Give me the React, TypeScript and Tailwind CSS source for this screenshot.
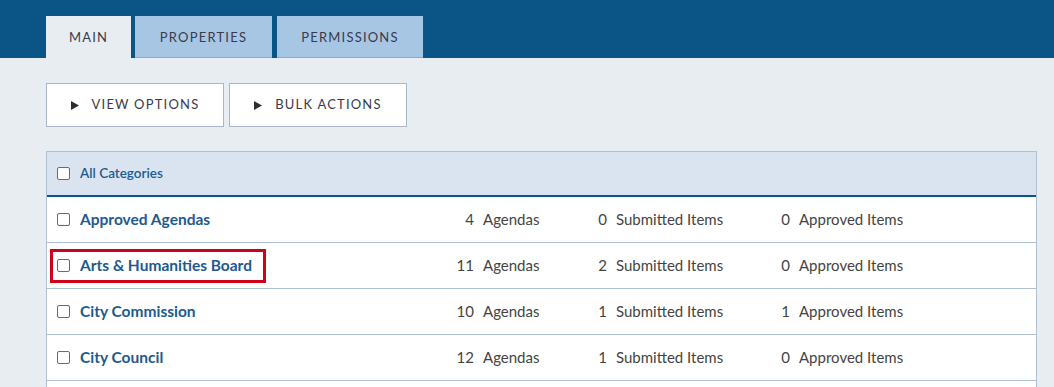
import React from 'react';

interface Category {
  name: string;
  agendas: number;
  submitted: number;
  approved: number;
  highlight?: boolean;
}

const categories: Category[] = [
  { name: 'Approved Agendas', agendas: 4, submitted: 0, approved: 0 },
  { name: 'Arts & Humanities Board', agendas: 11, submitted: 2, approved: 0, highlight: true },
  { name: 'City Commission', agendas: 10, submitted: 1, approved: 1 },
  { name: 'City Council', agendas: 12, submitted: 1, approved: 0 },
];

function Checkbox() {
  return <span className="block w-[13px] h-[13px] shrink-0 rounded-[2px] border border-[#6b6b6b] bg-white" />;
}

function Stat({ value, label, width }: { value: number; label: string; width: string }) {
  return (
    <div className={`flex items-center ${width}`}>
      <span className="w-[24px] text-right">{value}</span>
      <span className="ml-[9px]">{label}</span>
    </div>
  );
}

export default function App() {
  const tabs = ['MAIN', 'PROPERTIES', 'PERMISSIONS'];

  return (
    <div className="h-[387px] overflow-hidden bg-[#e8edf2] font-['Lato','Open_Sans',sans-serif]">
      {/* Header tabs */}
      <div className="h-[58px] bg-[#0b5486] flex items-end pl-[46px] gap-[4px]">
        {tabs.map((t, i) => (
          <div
            key={t}
            className={`h-[42px] pt-[2px] flex items-center justify-center text-[13px] tracking-[1.2px] text-[#3a3a4c] ${
              i === 0 ? 'w-[85px] bg-[#e8edf2]' : i === 1 ? 'w-[137px] bg-[#a7c6e4] border-b border-[#8ea9c6]' : 'w-[146px] bg-[#a7c6e4] border-b border-[#8ea9c6] ml-[1px]'
            }`}
          >
            {t}
          </div>
        ))}
      </div>

      {/* Action buttons */}
      <div className="flex gap-[5px] pl-[46px] pt-[25px]">
        {['VIEW OPTIONS', 'BULK ACTIONS'].map((b) => (
          <button
            key={b}
            className="w-[178px] h-[44px] bg-white border border-[#a9b7c7] flex items-center justify-center gap-[13px] text-[13px] tracking-[1.2px] text-[#3a3a4c]"
          >
            <svg width="8" height="9" viewBox="0 0 8 9" className="shrink-0">
              <path d="M0 0 L8 4.5 L0 9 Z" fill="#2e2e2e" />
            </svg>
            <span>{b}</span>
          </button>
        ))}
      </div>

      {/* Category table */}
      <div className="ml-[46px] mr-[17px] mt-[24px] border border-[#b0c1d4] border-b-0 bg-white">
        <div className="h-[45px] bg-[#dae4f0] border-b-[2px] border-[#0b5486] flex items-center pl-[10px] gap-[10px]">
          <Checkbox />
          <span className="text-[13.5px] font-semibold text-[#1d5a8e]">All Categories</span>
        </div>
        {categories.map((c) => (
          <div key={c.name} className="h-[46px] border-b border-[#b0c1d4] flex items-center text-[15px] text-[#444]">
            <div className="w-[403px] h-full flex items-center pl-[3px]">
              <div
                className={`flex items-center gap-[10px] h-[34px] pl-[4px] pr-[11px] border-[3px] ${
                  c.highlight ? 'border-[#d0021b]' : 'border-transparent'
                }`}
              >
                <Checkbox />
                <span className="font-bold text-[15.5px] text-[#1d5a8e]">{c.name}</span>
              </div>
            </div>
            <Stat value={c.agendas} label="Agendas" width="w-[133px]" />
            <Stat value={c.submitted} label="Submitted Items" width="w-[183px]" />
            <Stat value={c.approved} label="Approved Items" width="w-[200px]" />
          </div>
        ))}
        <div className="h-[46px]" />
      </div>
    </div>
  );
}
